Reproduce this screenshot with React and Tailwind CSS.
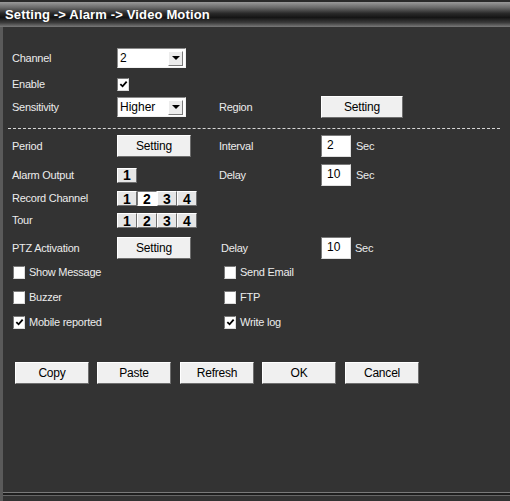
// Setting -> Alarm -> Video Motion panel

const Check = () => (
  <svg viewBox="0 0 10 10" className="w-[9px] h-[9px]">
    <path d="M1.5 4.5 L4 7 L8.5 1.8" fill="none" stroke="#000" strokeWidth="2" />
  </svg>
);

function CheckBox({ checked }) {
  return (
    <div className="w-[12px] h-[13px] bg-white border border-t-[#7a7a7a] border-l-[#7a7a7a] border-r-[#dcdcdc] border-b-[#dcdcdc] flex items-center justify-center">
      {checked && <Check />}
    </div>
  );
}

function Select({ value }) {
  return (
    <div className="w-[69px] h-[20px] bg-white border border-t-[#8a8a8a] border-l-[#8a8a8a] border-r-[#f2f2f2] border-b-[#f2f2f2] flex items-center justify-between pl-[2px] pr-[2px]">
      <span className="text-[12px] text-black leading-none">{value}</span>
      <div className="w-[15px] h-[15px] bg-[#ececec] border border-t-[#fff] border-l-[#fff] border-r-[#7a7a7a] border-b-[#7a7a7a] flex items-center justify-center">
        <div className="w-0 h-0 border-l-[4px] border-r-[4px] border-t-[4px] border-l-transparent border-r-transparent border-t-black" />
      </div>
    </div>
  );
}

function Btn({ children, w = 'w-[74px]' }) {
  return (
    <div className={`${w} h-[22px] bg-[#f0f0f0] border border-t-[#fff] border-l-[#fff] border-r-[#6e6e6e] border-b-[#6e6e6e] flex items-center justify-center text-[12px] text-black tracking-[-0.2px]`}>
      {children}
    </div>
  );
}

function NumInput({ value }) {
  return (
    <div className="w-[30px] h-[22px] bg-white border border-t-[#7a7a7a] border-l-[#7a7a7a] border-r-[#e0e0e0] border-b-[#e0e0e0] pl-[5px] pt-[2px] text-[12px] text-black leading-[14px]">
      {value}
    </div>
  );
}

function NumBoxes({ items, active }) {
  return (
    <div className="flex">
      {items.map((n) => (
        <div
          key={n}
          className={`w-[20px] h-[15px] flex items-center justify-center text-[14px] font-bold text-black leading-none border ${
            n === active
              ? 'bg-white border-t-[#7a7a7a] border-l-[#7a7a7a] border-r-[#fff] border-b-[#fff]'
              : 'bg-[#e6e6e6] border-t-[#fff] border-l-[#fff] border-r-[#6e6e6e] border-b-[#6e6e6e]'
          }`}
        >
          {n}
        </div>
      ))}
    </div>
  );
}

const Label = ({ children, w = 'w-[105px]' }) => (
  <div className={`${w} text-[11px] text-[#ececec] leading-none tracking-[-0.25px]`}>{children}</div>
);

const Sec = ({ ml = 'ml-[5px]' }) => (
  <span className={`${ml} text-[11px] text-[#ececec] tracking-[-0.25px]`}>Sec</span>
);

export default function App() {
  return (
    <div className="w-[510px] h-[501px] bg-[#333333] flex flex-col overflow-hidden" style={{ fontFamily: '"Liberation Sans", Arial, sans-serif' }}>
      {/* Title bar */}
      <div className="h-[27px] border-t-2 border-[#2a2a2a] bg-[linear-gradient(to_bottom,#9a9a9a_0%,#6a6a6a_22%,#2a2a2a_45%,#151515_62%,#3a3a3a_82%,#7a7a7a_100%)] flex items-center pl-[5px]">
        <span className="text-[13px] font-bold text-white tracking-[0.15px]">Setting -&gt; Alarm -&gt; Video Motion</span>
      </div>

      <div className="flex-1 flex flex-col border-l-[3px] border-l-[#5a5a5a]">
        {/* Body */}
        <div className="h-[465px] flex flex-col pl-[9px]">
          <div className="mt-[21px] h-[20px] flex items-center">
            <Label>Channel</Label>
            <Select value="2" />
          </div>

          <div className="mt-[10px] h-[12px] flex items-center">
            <Label>Enable</Label>
            <CheckBox checked />
          </div>

          <div className="mt-[6px] h-[22px] flex items-center">
            <Label>Sensitivity</Label>
            <div className="w-[102px]">
              <Select value="Higher" />
            </div>
            <Label w="w-[102px]">Region</Label>
            <Btn w="w-[82px]">Setting</Btn>
          </div>

          <div className="mt-[10px] -ml-[4px] w-[492px] border-t border-dashed border-[#d8d8d8]" />

          <div className="mt-[6px] h-[22px] flex items-center">
            <Label>Period</Label>
            <div className="w-[102px]">
              <Btn>Setting</Btn>
            </div>
            <Label w="w-[102px]">Interval</Label>
            <NumInput value="2" />
            <Sec />
          </div>

          <div className="mt-[7px] h-[22px] flex items-center">
            <Label>Alarm Output</Label>
            <div className="w-[102px]">
              <NumBoxes items={[1]} />
            </div>
            <Label w="w-[102px]">Delay</Label>
            <NumInput value="10" />
            <Sec />
          </div>

          <div className="mt-[5px] h-[15px] flex items-center">
            <Label>Record Channel</Label>
            <NumBoxes items={[1, 2, 3, 4]} active={2} />
          </div>

          <div className="mt-[7px] h-[15px] flex items-center">
            <Label>Tour</Label>
            <NumBoxes items={[1, 2, 3, 4]} />
          </div>

          <div className="mt-[9px] h-[22px] flex items-center">
            <Label>PTZ Activation</Label>
            <div className="w-[104px]">
              <Btn>Setting</Btn>
            </div>
            <Label w="w-[100px]">Delay</Label>
            <NumInput value="10" />
            <Sec ml="ml-[4px]" />
          </div>

          {[
            ['Show Message', false, 'Send Email', false, 'mt-[7px]'],
            ['Buzzer', false, 'FTP', false, 'mt-[12px]'],
            ['Mobile reported', true, 'Write log', true, 'mt-[12px]'],
          ].map(([l, lc, r, rc, mt]) => (
            <div key={l} className={`${mt} h-[13px] flex items-center`}>
              <div className="w-[212px] flex items-center pl-[1px]">
                <CheckBox checked={lc} />
                <span className="ml-[4px] text-[11px] text-[#ececec] leading-none tracking-[-0.25px]">{l}</span>
              </div>
              <CheckBox checked={rc} />
              <span className="ml-[4px] text-[11px] text-[#ececec] leading-none tracking-[-0.25px]">{r}</span>
            </div>
          ))}

          <div className="mt-[33px] flex items-center gap-[8px] pl-[3px]">
            <Btn>Copy</Btn>
            <Btn>Paste</Btn>
            <div className="ml-[1px]">
              <Btn>Refresh</Btn>
            </div>
            <Btn>OK</Btn>
            <div className="ml-[1px]">
              <Btn>Cancel</Btn>
            </div>
          </div>
        </div>

        {/* Bottom frame */}
        <div className="flex-1 border-t border-[#7a7a7a] bg-[linear-gradient(to_bottom,#1e1e1e_0px,#1e1e1e_2px,#666_2px,#666_3px,#333_3px)]" />
      </div>
    </div>
  );
}
